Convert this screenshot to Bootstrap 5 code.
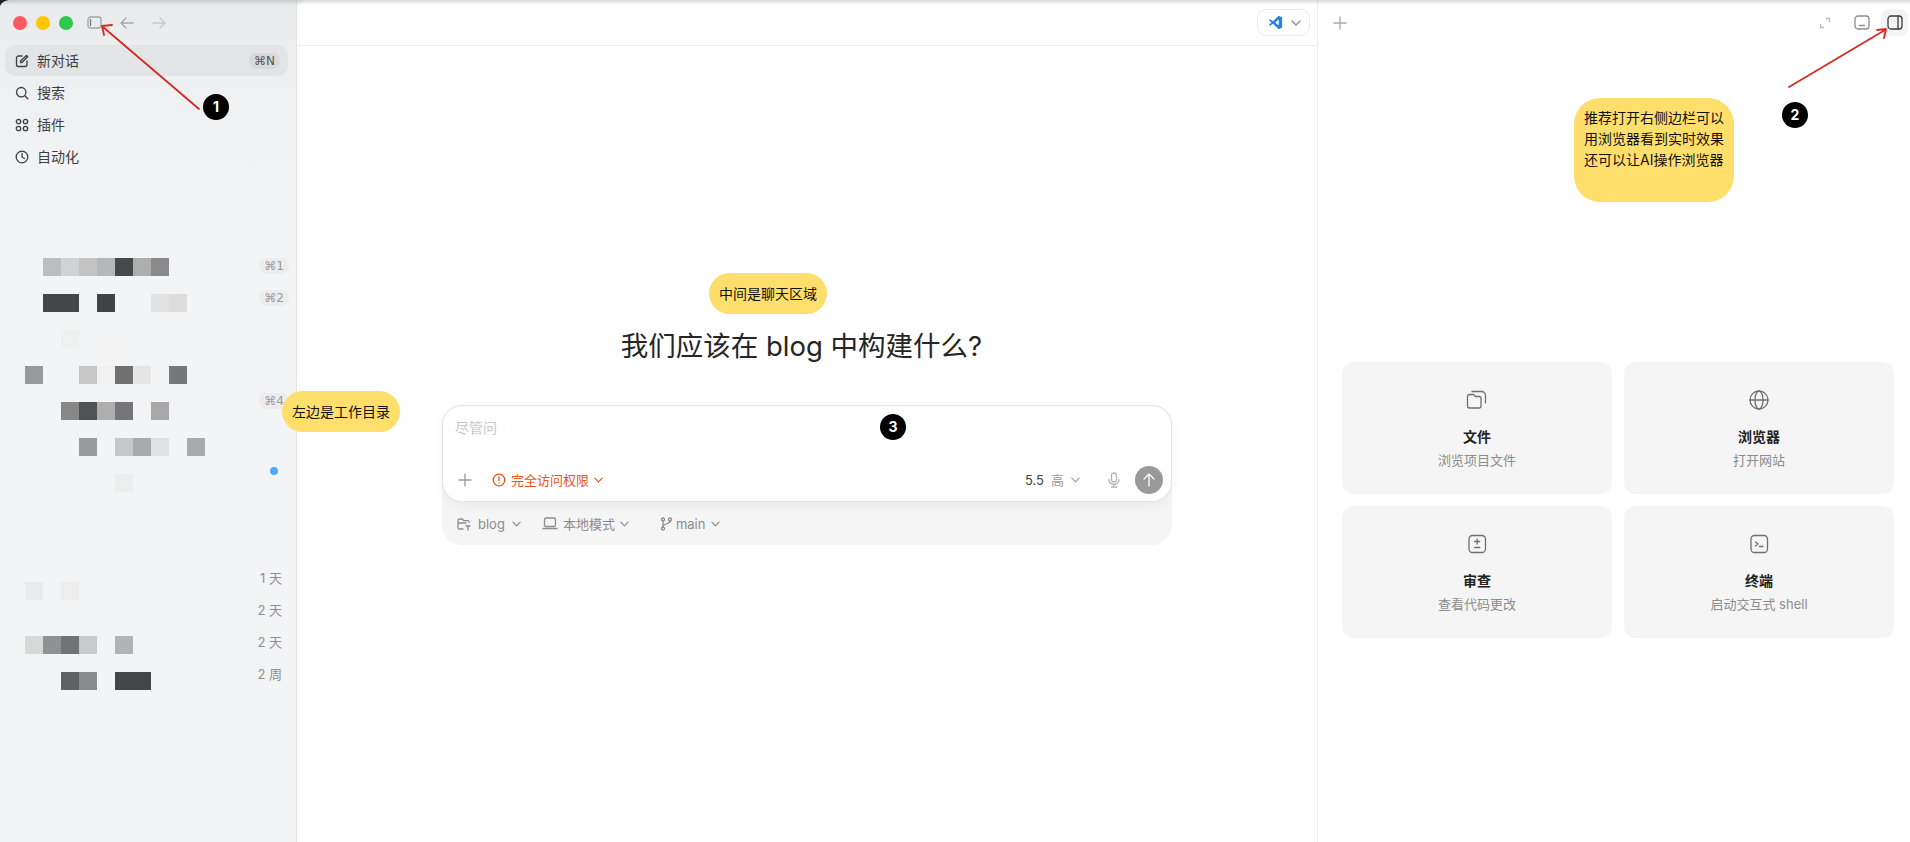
<!DOCTYPE html>
<html lang="zh-CN">
<head>
<meta charset="utf-8">
<title>Codex</title>
<link href="https://cdn.jsdelivr.net/npm/bootstrap@5.3.0/dist/css/bootstrap.min.css" rel="stylesheet">
<style>
html,body{height:842px;overflow:hidden}
body{font-family:Inter,"Noto Sans CJK SC","DejaVu Sans",sans-serif;font-size:14px;color:#242424;background:#f3f4f6;line-height:20px}
svg.ic{fill:none;stroke:currentColor;stroke-width:1.3;stroke-linecap:round;stroke-linejoin:round;flex:none;display:block}
.app-shell{height:842px;width:1910px}
.side-pane{width:297px;flex:none;height:842px;background:linear-gradient(180deg,#e9eaeb 0,#eff0f1 90px,#f3f4f6 200px);border-right:1px solid #e3e4e6}
.win-top{height:45px;padding-left:13px}
.light{width:14px;height:14px;border-radius:50%;margin-right:9px}
.l-red{background:#fd5a5f}.l-yel{background:#fec600}.l-grn{background:#2fc84f}
.nav-line{height:32px;padding:0 8px 0 10px;margin:0 8px 0 5px;gap:8px;color:#3e3e3e;border-radius:10px}
.nav-now{background:#e3e4e5;height:31px;margin-bottom:1px}
.key-pill{font-size:12px;line-height:16px;border-radius:8px;background:#ececed;color:#9a9a9a;padding:0 5px;font-family:"DejaVu Sans",Inter,sans-serif}
.key-dark{background:#d8d9da;color:#555}
.meta-line{height:32px;padding-right:7px}
.meta-time{font-size:13px;color:#8f8f8f;margin-right:7px}
.live-dot{width:8px;height:8px;border-radius:50%;background:#4eaaff;margin-right:11px}
.main-pane{width:1021px;flex:none;height:842px;background:#fff;border-right:1px solid #ededed;border-top-left-radius:10px}
.main-head{height:46px;border-bottom:1px solid #ededed;padding-right:7px}
.open-btn{width:53px;height:27px;border:1px solid #ececec;border-radius:9px;background:#fff;gap:8px;padding-left:10px;color:#8a8a8a}
.hero{font-size:27.500px;line-height:36px;font-weight:400;color:#262626;margin:282px 0 0;padding-right:11px;text-align:center}
.composer-wrap{width:730px;margin:41px auto 0;background:#f5f5f5;border-radius:20px;height:140px}
.composer-box{height:97px;background:#fff;border:1px solid #e4e4e4;border-radius:20px;box-shadow:0 3px 12px rgba(0,0,0,.05);padding:12px 8px 7px 12px}
.ask-text{color:#c9c9c9;font-size:14px;line-height:20px}
.perm-text{color:#e5551b;font-size:13px;gap:5px;margin-left:20px}
.tool-text{font-size:13px;color:#8b8b8b;gap:7px}
.tool-mode{gap:5px}
.tool-branch{gap:3px;margin-left:10px}
.chev-pad{margin-left:3px}
.tools-row{height:43px;padding-left:15px;gap:21px}
.ver-text{font-size:13px;color:#444;gap:7px}
.gray-text{color:#9a9a9a}
.send-btn{width:28px;height:28px;border-radius:50%;background:#999;color:#fff}
.right-pane{flex:1;height:842px;background:#fff}
.right-head{height:45px;padding:0 2px 0 15px}
.tab-on{width:27px;height:27px;border-radius:8px;background:#f4f4f4;color:#3c3c3c}
.grid-cards{display:grid;grid-template-columns:270px 270px;grid-auto-rows:132px;gap:12px;padding-left:24px;margin-top:317px}
.act-card{background:#f5f5f5;border-radius:12px;color:#6f6f6f;padding-top:27px}
.act-name{font-size:14px;font-weight:600;color:#222;margin-top:16px;line-height:20px}
.act-sub{font-size:13px;color:#8c8c8c;margin-top:3px;line-height:20px}
.note-tag{position:absolute;background:#ffdf6b;color:#111;font-size:14px;line-height:20px;border-radius:20.500px;height:41px;width:118px;display:flex;align-items:center;justify-content:center;z-index:5;white-space:nowrap}
.note-left{left:282px;top:391px}
.note-mid{left:709px;top:273px}
.note-right{left:1574px;top:98px;width:160px;height:104px;border-radius:26px;display:block;padding:9px 10px;line-height:21px;white-space:normal}
.num-dot{position:absolute;width:26px;height:26px;border-radius:50%;background:#000;color:#fff;font-size:14px;font-weight:700;display:flex;align-items:center;justify-content:center;z-index:6}
.overlay-art{position:absolute;left:0;top:0;z-index:4;pointer-events:none}
.top-shade{position:absolute;left:0;top:0;width:100%;height:5px;background:linear-gradient(180deg,rgba(0,0,0,.14),rgba(0,0,0,0));z-index:3;pointer-events:none}
</style>
</head>
<body>
<div class="top-shade"></div>
<div class="app-shell d-flex">
  <aside class="side-pane d-flex flex-column">
    <div class="win-top d-flex align-items-center">
      <span class="light l-red"></span><span class="light l-yel"></span><span class="light l-grn"></span>
      <svg class="ic" width="15" height="13" viewBox="0 0 15 13" style="color:#a4a4a4;margin-left:5px"><rect x="1" y="1" width="13" height="11" rx="2.500"/><path d="M3.500 3.500v6" stroke="#777"/></svg>
      <svg class="ic" width="14" height="12" viewBox="0 0 14 12" style="margin-left:18px;color:#a6a6a6"><path d="M13 6H1M6 1 1 6l5 5"/></svg>
      <svg class="ic" width="14" height="12" viewBox="0 0 14 12" style="margin-left:18px;color:#c8c8c8"><path d="M1 6h12M8 1l5 5-5 5"/></svg>
    </div>
    <div class="nav-line nav-now d-flex align-items-center">
      <svg class="ic" width="14" height="14" viewBox="0 0 14 14"><path d="M7 2H3.500A2 2 0 0 0 1.500 4v6.500a2 2 0 0 0 2 2H10a2 2 0 0 0 2-2V7"/><path d="M5.500 8.500V7l6-5.500 1.200 1.300L6.900 8.500z"/></svg>
      <span>新对话</span><span class="key-pill key-dark ms-auto">⌘N</span>
    </div>
    <div class="nav-line d-flex align-items-center">
      <svg class="ic" width="14" height="14" viewBox="0 0 14 14"><circle cx="6.200" cy="6.200" r="4.700"/><path d="m9.800 9.800 3 3"/></svg><span>搜索</span>
    </div>
    <div class="nav-line d-flex align-items-center">
      <svg class="ic" width="14" height="14" viewBox="0 0 14 14"><circle cx="3.500" cy="3.500" r="2.200"/><circle cx="10.500" cy="3.500" r="2.200"/><circle cx="3.500" cy="10.500" r="2.200"/><circle cx="10.500" cy="10.500" r="2.200"/></svg><span>插件</span>
    </div>
    <div class="nav-line d-flex align-items-center">
      <svg class="ic" width="14" height="14" viewBox="0 0 14 14"><circle cx="7" cy="7" r="5.800"/><path d="M7 3.500V7l2.500 1.500"/></svg><span>自动化</span>
    </div>
    <div class="meta-line d-flex align-items-center justify-content-end" style="margin-top:77px"><span class="key-pill">⌘1</span></div>
    <div class="meta-line d-flex align-items-center justify-content-end"><span class="key-pill">⌘2</span></div>
    <div class="meta-line d-flex align-items-center justify-content-end" style="margin-top:71px"><span class="key-pill">⌘4</span></div>
    <div class="meta-line d-flex align-items-center justify-content-end" style="margin-top:38px"><span class="live-dot"></span></div>
    <div class="meta-line d-flex align-items-center justify-content-end" style="margin-top:75px"><span class="meta-time">1 天</span></div>
    <div class="meta-line d-flex align-items-center justify-content-end"><span class="meta-time">2 天</span></div>
    <div class="meta-line d-flex align-items-center justify-content-end"><span class="meta-time">2 天</span></div>
    <div class="meta-line d-flex align-items-center justify-content-end"><span class="meta-time">2 周</span></div>
  </aside>

  <main class="main-pane">
    <div class="main-head d-flex align-items-center justify-content-end">
      <div class="open-btn d-flex align-items-center">
        <svg width="15" height="15" viewBox="0 0 14 14"><path fill="#2583df" d="M10 .800 13.200 2.300v9.400L10 13.200 4.700 8.100 2 10.100 .800 9.300 3.300 7 .800 4.700 2 3.900l2.700 2zM10 4.300 6.700 7 10 9.700z"/></svg>
        <svg class="ic" width="10" height="6" viewBox="0 0 10 6"><path d="m1 1 4 4 4-4"/></svg>
      </div>
    </div>
    <h1 class="hero">我们应该在 blog 中构建什么?</h1>
    <div class="composer-wrap">
      <div class="composer-box d-flex flex-column">
        <div class="ask-text flex-grow-1">尽管问</div>
        <div class="d-flex align-items-center">
          <svg class="ic" width="14" height="14" viewBox="0 0 14 14" style="color:#9a9a9a;margin-left:3px"><path d="M7 1v12M1 7h12"/></svg>
          <div class="perm-text d-flex align-items-center">
            <svg class="ic" width="14" height="14" viewBox="0 0 14 14"><circle cx="7" cy="7" r="5.800"/><path d="M7 4v3.500M7 10v.1"/></svg>
            <span>完全访问权限</span>
            <svg class="ic" width="9" height="6" viewBox="0 0 10 6"><path d="m1 1 4 4 4-4"/></svg>
          </div>
          <div class="ver-text d-flex align-items-center ms-auto">
            <span>5.5</span><span class="gray-text">高</span>
            <svg class="ic gray-text" width="9" height="6" viewBox="0 0 10 6"><path d="m1 1 4 4 4-4"/></svg>
          </div>
          <svg class="ic" width="12" height="16" viewBox="0 0 12 16" style="color:#b4b4b4;margin:0 15px 0 28px"><rect x="3.500" y="1" width="5" height="9" rx="2.500"/><path d="M1 7.500a5 5 0 0 0 10 0M6 12.500V15M3.500 15h5"/></svg>
          <div class="send-btn d-flex align-items-center justify-content-center">
            <svg class="ic" width="14" height="14" viewBox="0 0 14 14"><path d="M7 13V1M2 6l5-5 5 5"/></svg>
          </div>
        </div>
      </div>
      <div class="tools-row d-flex align-items-center">
        <div class="tool-text d-flex align-items-center">
          <svg class="ic" width="14" height="14" viewBox="0 0 14 14"><path d="M1 11V3.500A1.500 1.500 0 0 1 2.500 2h2.800l1.400 1.700h3.800A1.500 1.500 0 0 1 12 5.200M1 6h8M1 11a1 1 0 0 0 1 1h4"/><path d="M9 9h4M11 9v4"/></svg>
          <span>blog</span><svg class="ic" width="9" height="6" viewBox="0 0 10 6"><path d="m1 1 4 4 4-4"/></svg>
        </div>
        <div class="tool-text tool-mode d-flex align-items-center">
          <svg class="ic" width="16" height="13" viewBox="0 0 16 13"><rect x="2.500" y="1" width="11" height="8.500" rx="1.500"/><path d="M1 11.500h14"/></svg>
          <span>本地模式</span><svg class="ic" width="9" height="6" viewBox="0 0 10 6"><path d="m1 1 4 4 4-4"/></svg>
        </div>
        <div class="tool-text tool-branch d-flex align-items-center">
          <svg class="ic" width="13" height="14" viewBox="0 0 13 14"><circle cx="3" cy="2.500" r="1.500"/><circle cx="3" cy="11.500" r="1.500"/><circle cx="10" cy="2.500" r="1.500"/><path d="M3 4v6M10 4c0 2.500-3.500 2.500-5 3.500C4 8 3.500 8.500 3 9.500"/></svg>
          <span>main</span><svg class="ic chev-pad" width="9" height="6" viewBox="0 0 10 6"><path d="m1 1 4 4 4-4"/></svg>
        </div>
      </div>
    </div>
  </main>

  <section class="right-pane">
    <div class="right-head d-flex align-items-center">
      <svg class="ic" width="14" height="14" viewBox="0 0 14 14" style="color:#a8a8a8"><path d="M7 1v12M1 7h12"/></svg>
      <svg class="ic ms-auto" width="12" height="12" viewBox="0 0 12 12" style="color:#b8b8b8"><path d="M7.500 1.500h3v3M1.500 7.500v3h3"/></svg>
      <svg class="ic" width="16" height="15" viewBox="0 0 16 15" style="color:#8c8c8c;margin:0 11px 0 23px"><rect x="1" y="1" width="14" height="13" rx="3"/><path d="M5.500 10.500h5"/></svg>
      <div class="tab-on d-flex align-items-center justify-content-center">
        <svg class="ic" width="16" height="15" viewBox="0 0 16 15"><rect x="1" y="1" width="14" height="13" rx="3"/><path d="M11 1v13"/></svg>
      </div>
    </div>
    <div class="grid-cards">
      <div class="act-card d-flex flex-column align-items-center">
        <svg class="ic" width="22" height="22" viewBox="0 0 22 22"><path d="M1.500 8V17a2 2 0 0 0 2 2H13a2 2 0 0 0 2-2v-7.500a2 2 0 0 0-2-2H9.500L7.500 5.500h-4a2 2 0 0 0-2 2.500z"/><path d="M6 2.500h9.500a4 4 0 0 1 4 4V14"/></svg>
        <div class="act-name">文件</div><div class="act-sub">浏览项目文件</div>
      </div>
      <div class="act-card d-flex flex-column align-items-center">
        <svg class="ic" width="22" height="22" viewBox="0 0 22 22"><circle cx="11" cy="11" r="9"/><ellipse cx="11" cy="11" rx="4" ry="9"/><path d="M2 11h18"/></svg>
        <div class="act-name">浏览器</div><div class="act-sub">打开网站</div>
      </div>
      <div class="act-card d-flex flex-column align-items-center">
        <svg class="ic" width="22" height="22" viewBox="0 0 22 22"><rect x="3" y="2.500" width="16.500" height="17" rx="3.500"/><path d="M11.200 6v5M8.700 8.500h5M8.700 14.500h5"/></svg>
        <div class="act-name">审查</div><div class="act-sub">查看代码更改</div>
      </div>
      <div class="act-card d-flex flex-column align-items-center">
        <svg class="ic" width="22" height="22" viewBox="0 0 22 22"><rect x="3" y="2.500" width="16.500" height="17" rx="3.500"/><path d="m7.500 9 2.500 2-2.500 2M11.500 13.500h3.500"/></svg>
        <div class="act-name">终端</div><div class="act-sub">启动交互式 shell</div>
      </div>
    </div>
  </section>
</div>

<div class="note-tag note-left">左边是工作目录</div>
<div class="note-tag note-mid">中间是聊天区域</div>
<div class="note-tag note-right">推荐打开右侧边栏可以<br>用浏览器看到实时效果<br>还可以让AI操作浏览器</div>
<div class="num-dot" style="left:203px;top:94px">1</div>
<div class="num-dot" style="left:1782px;top:102px">2</div>
<div class="num-dot" style="left:880px;top:414px">3</div>

<svg class="overlay-art" width="1910" height="842" viewBox="0 0 1910 842" fill="none">
  <path d="M0 0H9Q2 1 0 6Z" fill="#222"/>
  <g stroke="#d32c22" stroke-width="1.800" stroke-linecap="round" stroke-linejoin="round">
    <path d="M199 109 103 27M112 25 102 26 104 35"/>
    <path d="M1789 87 1885 30M1877 30 1886 29 1884 38"/>
  </g>
  <g>
    <rect x="43" y="258" width="18" height="18" fill="#bcbdbe"/><rect x="61" y="258" width="18" height="18" fill="#d1d2d3"/><rect x="79" y="258" width="18" height="18" fill="#c4c4c4"/><rect x="97" y="258" width="18" height="18" fill="#b6b7b8"/><rect x="115" y="258" width="18" height="18" fill="#47484a"/><rect x="133" y="258" width="18" height="18" fill="#aeaeaf"/><rect x="151" y="258" width="18" height="18" fill="#8a8a8b"/>
    <rect x="43" y="294" width="36" height="18" fill="#454648"/><rect x="97" y="294" width="18" height="18" fill="#424346"/><rect x="151" y="294" width="18" height="18" fill="#e1e2e1"/><rect x="169" y="294" width="18" height="18" fill="#dcdddc"/>
    <rect x="61" y="330" width="18" height="18" fill="#eff0f0"/><rect x="97" y="330" width="18" height="36" fill="#f3f4f3"/><rect x="115" y="348" width="18" height="18" fill="#f3f4f3"/>
    <rect x="25" y="366" width="18" height="18" fill="#98999a"/><rect x="79" y="366" width="18" height="18" fill="#c6c6c6"/><rect x="97" y="366" width="18" height="18" fill="#f0f1f0"/><rect x="115" y="366" width="18" height="18" fill="#6f7071"/><rect x="133" y="366" width="18" height="18" fill="#e4e5e4"/><rect x="169" y="366" width="18" height="18" fill="#767778"/>
    <rect x="61" y="402" width="18" height="18" fill="#878788"/><rect x="79" y="402" width="18" height="18" fill="#4f5253"/><rect x="97" y="402" width="18" height="18" fill="#aeaeaf"/><rect x="115" y="402" width="18" height="18" fill="#767678"/><rect x="151" y="402" width="18" height="18" fill="#a8a8a9"/>
    <rect x="79" y="438" width="18" height="18" fill="#999a9b"/><rect x="115" y="438" width="18" height="18" fill="#c6c7c8"/><rect x="133" y="438" width="18" height="18" fill="#aaaaab"/><rect x="151" y="438" width="18" height="18" fill="#e0e1e2"/><rect x="187" y="438" width="18" height="18" fill="#a8aaab"/>
    <rect x="115" y="474" width="18" height="18" fill="#eceded"/>
    <rect x="25" y="582" width="18" height="18" fill="#e9eaeb"/><rect x="43" y="582" width="18" height="18" fill="#f2f3f5"/><rect x="61" y="582" width="18" height="18" fill="#ecedec"/>
    <rect x="25" y="636" width="18" height="18" fill="#d7d9d8"/><rect x="43" y="636" width="18" height="18" fill="#909192"/><rect x="61" y="636" width="18" height="18" fill="#727374"/><rect x="79" y="636" width="18" height="18" fill="#c7cacb"/><rect x="115" y="636" width="18" height="18" fill="#b2b3b4"/>
    <rect x="61" y="672" width="18" height="18" fill="#606162"/><rect x="79" y="672" width="18" height="18" fill="#8a8b8c"/><rect x="115" y="672" width="36" height="18" fill="#444548"/>
  </g>
</svg>
<script src="https://cdn.jsdelivr.net/npm/bootstrap@5.3.0/dist/js/bootstrap.bundle.min.js"></script>
</body>
</html>
